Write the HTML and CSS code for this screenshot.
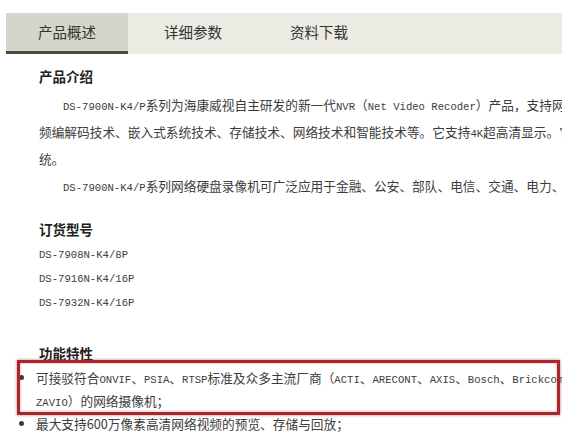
FILE: index.html
```html
<!DOCTYPE html>
<html lang="zh">
<head>
  <meta charset="UTF-8">
  <title>DS-7900N-K4/P 产品概述</title>
  <link rel="stylesheet" href="styles.css">
</head>
<body>

<div class="page">
  <!-- 选项卡 -->
  <div class="tabs">
    <div class="tab active">产品概述</div>
    <div class="tab">详细参数</div>
    <div class="tab">资料下载</div>
  </div>

  <div class="content">
    <div class="block">
      <h2>产品介绍</h2>
      <p class="indent"><span class="en">DS-7900N-K4/P</span>系列为海康威视自主研发的新一代<span class="en">NVR</span>（<span class="en">Net Video Recoder</span>）产品，支持网络视</p>
      <p>频编解码技术、嵌入式系统技术、存储技术、网络技术和智能技术等。它支持<span class="en">4K</span>超高清显示。它可广泛</p>
      <p>统。</p>
      <p class="indent"><span class="en">DS-7900N-K4/P</span>系列网络硬盘录像机可广泛应用于金融、公安、部队、电信、交通、电力、教育</p>
    </div>

    <div class="block models">
      <h2>订货型号</h2>
      <p class="en">DS-7908N-K4/8P</p>
      <p class="en">DS-7916N-K4/16P</p>
      <p class="en">DS-7932N-K4/16P</p>
    </div>

    <div class="block features">
      <h2>功能特性</h2>
      <ul>
        <li class="hot">可接驳符合<span class="en">ONVIF</span>、<span class="en">PSIA</span>、<span class="en">RTSP</span>标准及众多主流厂商（<span class="en">ACTI</span>、<span class="en">ARECONT</span>、<span class="en">AXIS</span>、<span class="en">Bosch</span>、<span class="en">Brickcom</span>、<span class="en">Canon</span><br><span class="en">ZAVIO</span>）的网络摄像机；</li>
        <li>最大支持600万像素高清网络视频的预览、存储与回放；</li>
      </ul>
    </div>
  </div>
</div>

</body>
</html>
```

FILE: styles.css
```css
body {
  margin: 0;
  background-color: #fff;
  font-family: "Noto Sans CJK SC", sans-serif;
  color: #3c3c3c;
}
.page {
  margin-left: 5px;
  padding-top: 13px;
  width: 557px;
  height: 420px;
  overflow: hidden;
}
.tabs {
  display: flex;
  gap: 4px;
  height: 41px;
  margin-left: 1px;
  background-color: #ebebe3;
}
.tab {
  height: 38px;
  line-height: 38px;
  padding: 0 32px;
  font-size: 14.5px;
  color: #333;
  border-bottom: 3px solid transparent;
}
.tab.active {
  background-color: #d5d6cb;
  border-bottom-color: #4b4b42;
}
.content {
  padding-left: 34px;
  font-size: 12.7px;
}
h2 {
  margin: 0;
  font-size: 13.5px;
  font-weight: bold;
  color: #222;
}
p {
  margin: 0;
  white-space: nowrap;
}
.en {
  font-family: "Liberation Mono", monospace;
  font-size: 10.6px;
  line-height: 1;
}
.block {
  line-height: 27px;
}
.block:first-child {
  margin-top: 7px;
}
.block:first-child h2 {
  line-height: 30px;
}
.indent {
  text-indent: 24px;
}
.models {
  margin-top: 16px;
  line-height: 24px;
}
.models h2 {
  line-height: 28px;
}
.models .en {
  line-height: 24px;
}
.features {
  margin-top: 25px;
  line-height: 23px;
}
.features h2 {
  line-height: 26px;
}
ul {
  margin: 0 0 0 -3px;
  padding: 0;
  list-style: disc;
}
li {
  white-space: nowrap;
}
li.hot {
  position: relative;
}
li.hot::after {
  content: "";
  position: absolute;
  left: -19px;
  right: 2px;
  top: -6px;
  bottom: -3px;
  border: 3px solid #a8262c;
  box-shadow: 0 0 3px rgba(160, 30, 40, 0.6), inset 0 0 3px rgba(160, 30, 40, 0.4);
}
```
